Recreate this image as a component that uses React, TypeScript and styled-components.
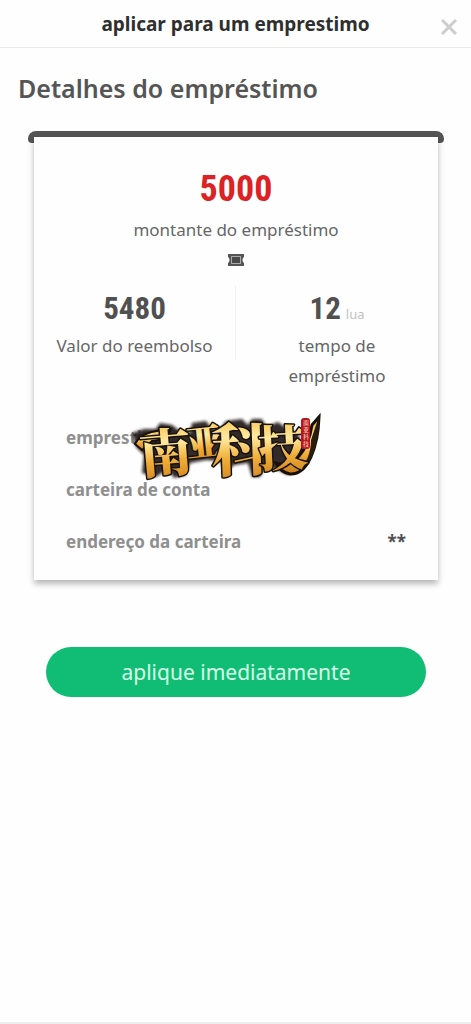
import React from "react";
import styled, { createGlobalStyle } from "styled-components";

const GlobalStyle = createGlobalStyle`
  *, *::before, *::after { box-sizing: border-box; }
  body {
    margin: 0;
    background: #fefefe;
    color: #5c5c5c;
    font-family: "Noto Sans", "Noto Sans CJK SC", sans-serif;
  }
  h1, h2, p, dl, dt, dd { margin: 0; }
`;

const Page = styled.div`
  min-height: 100vh;
  display: flex;
  flex-direction: column;
  border-bottom: 2px solid #eeeeee;
`;

const Header = styled.header`
  display: grid;
  grid-template-columns: 44px 1fr 44px;
  align-items: center;
  height: 48px;
  border-bottom: 1px solid #e9e9e6;
`;

const HeaderTitle = styled.h1`
  grid-column: 2;
  text-align: center;
  font-size: 19px;
  line-height: 24px;
  font-weight: 700;
  color: #2f2f2f;
`;

const CloseButton = styled.button`
  display: flex;
  align-items: center;
  justify-content: center;
  height: 44px;
  padding: 6px 0 0;
  border: 0;
  background: none;
  color: #cdcdcd;
  cursor: pointer;
`;

const Main = styled.main`
  flex: 1;
  padding: 24px 27px 24px 28px;
`;

const SectionTitle = styled.h2`
  margin: 0 -10px 27px;
  font-size: 25px;
  line-height: 32px;
  font-weight: 600;
  color: #555555;
`;

const Rail = styled.div`
  height: 12px;
  border: solid #545454;
  border-width: 6px 6px 0;
  border-radius: 8px 8px 4px 4px;
`;

const Card = styled.section`
  margin: -6px 6px 0;
  padding: 30px 0 12px;
  position: relative;
  background: #fefefe;
  box-shadow: 0 4px 6px rgba(0, 0, 0, 0.28);
`;

const Summary = styled.div`
  display: flex;
  flex-direction: column;
  align-items: center;
`;

const Amount = styled.strong`
  margin-bottom: 4px;
  font-family: "Roboto Condensed", Roboto, sans-serif;
  font-size: 36px;
  line-height: 44px;
  font-weight: 700;
  color: #dc2224;
`;

const Caption = styled.p`
  font-size: 17px;
  line-height: 30px;
  text-align: center;
  color: #666666;
`;

const TicketIcon = styled.svg`
  margin-top: 9px;
`;

const Figures = styled.div`
  display: grid;
  grid-template-columns: 1fr 1fr;
  margin-top: 20px;
`;

const Figure = styled.div<{ $divided?: boolean }>`
  display: flex;
  flex-direction: column;
  align-items: center;
  padding: 0 48px;
  ${(p) =>
    p.$divided &&
    `padding: 0;
     align-self: start;
     height: 74px;
     border-right: 1px solid #f0f0f0;`}
`;

const FigureLine = styled.div`
  display: flex;
  align-items: baseline;
  gap: 5px;
`;

const FigureValue = styled.strong`
  font-family: "Roboto Condensed", Roboto, sans-serif;
  font-size: 31px;
  line-height: 45px;
  font-weight: 700;
  color: #505050;
`;

const Unit = styled.small`
  font-size: 13px;
  line-height: 16px;
  color: #c2c2c2;
`;

const Details = styled.dl`
  margin-top: 21px;
  padding: 0 32px;
`;

const DetailRow = styled.div`
  display: flex;
  justify-content: space-between;
  align-items: center;
  height: 52px;
  font-size: 17px;
  line-height: 24px;
  font-weight: 700;
`;

const Term = styled.dt`
  color: #8f8f8f;
`;

const Value = styled.dd`
  color: #505050;
`;

const Brand = styled.svg`
  position: absolute;
  left: calc(50% - 106px);
  top: 272px;
  overflow: visible;
`;

const ApplyButton = styled.button`
  display: block;
  width: calc(100% - 36px);
  height: 50px;
  margin: 67px auto 0;
  border: 0;
  border-radius: 25px;
  background: #11bd75;
  color: #d6ffea;
  font-family: inherit;
  font-size: 21px;
  line-height: 30px;
  cursor: pointer;
`;

const characters = [
  { char: "南", x: 9, y: 63, size: 52, tilt: -5 },
  { char: "亚", x: 55, y: 47, size: 37, tilt: -6 },
  { char: "科", x: 81, y: 62, size: 58, tilt: -2 },
  { char: "技", x: 128, y: 57, size: 49, tilt: -3 },
];

function BrandLogo() {
  return (
    <Brand width="200" height="76" viewBox="0 0 200 76" role="img" aria-label="南亚科技">
      <defs>
        <linearGradient id="gold" x1="0" y1="0" x2="0" y2="1">
          <stop offset="0.1" stopColor="#f6bd43" />
          <stop offset="0.4" stopColor="#ffeaa0" />
          <stop offset="0.65" stopColor="#efad38" />
          <stop offset="1" stopColor="#c87c1c" />
        </linearGradient>
        <filter id="halo" x="-10%" y="-20%" width="120%" height="140%">
          <feGaussianBlur stdDeviation="1.5" />
        </filter>
      </defs>
      <path
        d="M2 24 14 20 26 20 30 14 42 16 50 22 60 24 62 14 76 12 82 20 90 20 96 12 112 10
           118 16 122 10 132 10 136 18 148 13 156 19 168 24 173 40 168 60 158 66 146 60 135 58
           130 68 122 68 118 54 104 56 96 64 90 52 76 51 60 54 56 66 44 69 38 60 26 68 12 64
           14 46 6 38Z"
        fill="#17110b"
        opacity="0.88"
        filter="url(#halo)"
      />
      <path
        d="M146 54C164 59 178 42 182 16L189 8C188 38 178 66 160 65C154 64 149 60 146 54Z"
        fill="url(#gold)"
        stroke="#17110b"
        strokeWidth="3"
      />
      <path d="M181 31 189 7C189 37 181 57 168 63C177 54 181 43 181 31Z" fill="#2b1b0d" />
      <path
        d="M5 35C10 25 20 22 41 20L35 30 22 32 12 41Z"
        fill="url(#gold)"
        stroke="#17110b"
        strokeWidth="2"
      />
      <g
        fontFamily="'Noto Serif CJK SC', 'Noto Sans CJK SC', sans-serif"
        fontWeight="900"
        strokeLinejoin="round"
      >
        <g fill="url(#gold)" stroke="#17110b" strokeWidth="3" paintOrder="stroke">
          {characters.map(({ char, x, y, size, tilt }) => (
            <text
              key={char}
              x={x}
              y={y}
              fontSize={size}
              transform={`rotate(${tilt} ${x + size / 2} ${y - size / 2})`}
            >
              {char}
            </text>
          ))}
        </g>
        <rect x="171" y="9" width="9" height="31" rx="3" fill="#b9151d" />
        <g fill="#ffe0d5" fontSize="6" fontWeight="500">
          {["南", "亚", "科", "技"].map((char, i) => (
            <text key={char} x="173" y={16 + i * 7}>
              {char}
            </text>
          ))}
        </g>
      </g>
    </Brand>
  );
}

export default function App() {
  return (
    <>
      <GlobalStyle />
      <Page>
        <Header>
          <HeaderTitle>aplicar para um emprestimo</HeaderTitle>
          <CloseButton type="button" aria-label="Fechar">
            <svg width="16" height="16" viewBox="0 0 16 16">
              <path d="M1 1 15 15M15 1 1 15" stroke="currentColor" strokeWidth="3" />
            </svg>
          </CloseButton>
        </Header>
        <Main>
          <SectionTitle>Detalhes do empréstimo</SectionTitle>
          <Rail />
          <Card>
            <Summary>
              <Amount>5000</Amount>
              <Caption>montante do empréstimo</Caption>
              <TicketIcon width="16" height="12" viewBox="0 0 16 12" aria-hidden="true">
                <path d="M0 0H16V3Q14.5 4 14.5 6T16 9V12H0V9Q1.5 8 1.5 6T0 3Z" fill="#555555" />
                <rect x="3.5" y="2.5" width="9" height="7" fill="#4a4a4a" stroke="#a9a9a9" />
              </TicketIcon>
            </Summary>
            <Figures>
              <Figure $divided>
                <FigureValue>5480</FigureValue>
                <Caption>Valor do reembolso</Caption>
              </Figure>
              <Figure>
                <FigureLine>
                  <FigureValue>12</FigureValue>
                  <Unit>lua</Unit>
                </FigureLine>
                <Caption>tempo de empréstimo</Caption>
              </Figure>
            </Figures>
            <Details>
              <DetailRow>
                <Term>emprestimo</Term>
                <Value />
              </DetailRow>
              <DetailRow>
                <Term>carteira de conta</Term>
                <Value />
              </DetailRow>
              <DetailRow>
                <Term>endereço da carteira</Term>
                <Value>**</Value>
              </DetailRow>
            </Details>
            <BrandLogo />
          </Card>
          <ApplyButton type="button">aplique imediatamente</ApplyButton>
        </Main>
      </Page>
    </>
  );
}
